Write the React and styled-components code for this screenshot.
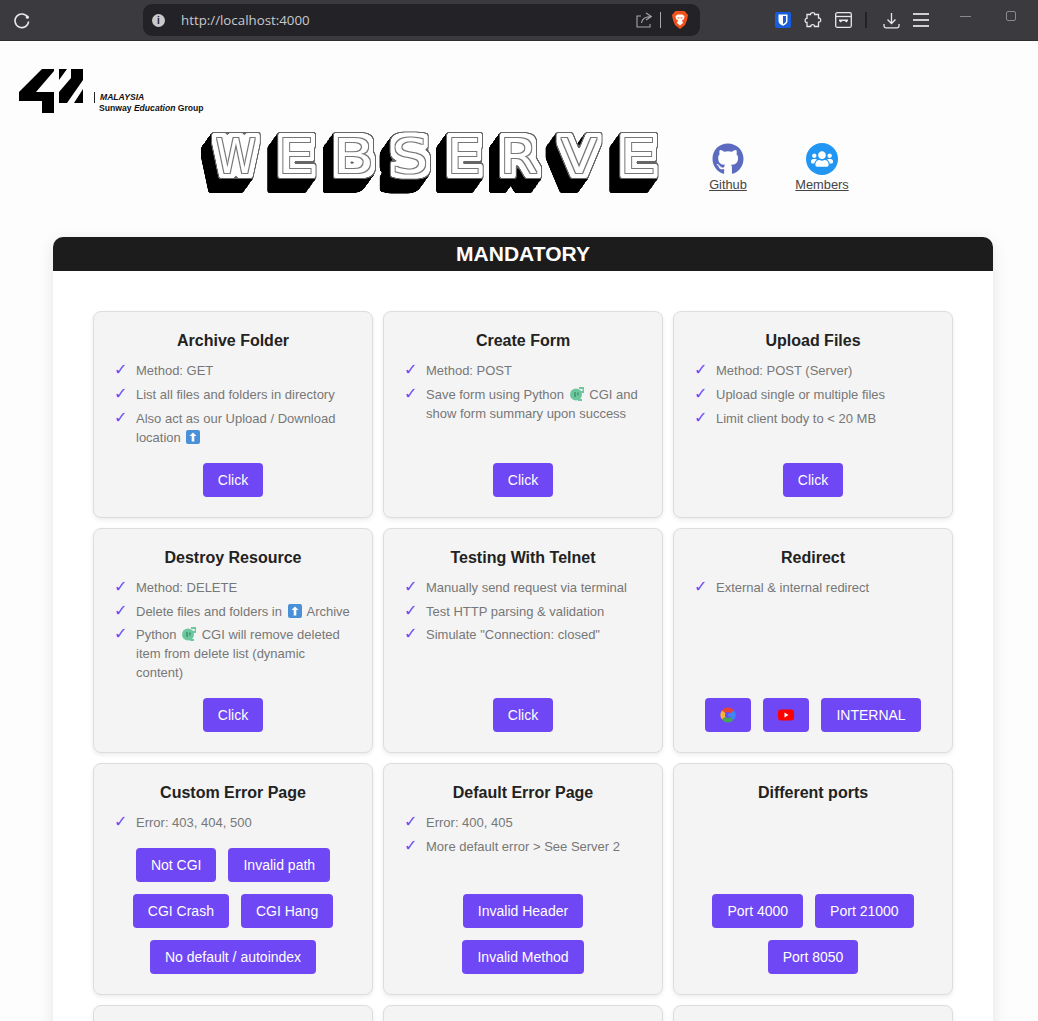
import React from 'react';
import styled, {createGlobalStyle} from 'styled-components';
import {FaGithub, FaUsers} from 'react-icons/fa';

const Global = createGlobalStyle`
html, body {
  margin: 0;
  height: 1021px;
  overflow: hidden;
  background: #fdfdfd;
  font-family: "Liberation Sans", Arial, sans-serif;
}
* { box-sizing: border-box; }
`

const ArrowEmoji = () => (
  <EmojiSvg viewBox="0 0 14 14">
    <rect width="14" height="14" rx="2" fill="#4a90d9" />
    <path d="M7 2.5 10.500 6H8.300v5.500H5.700V6H3.500z" fill="#fff" />
  </EmojiSvg>
)

const SnakeEmoji = () => (
  <EmojiSvg viewBox="0 0 14 14">
    <circle cx="6" cy="7.500" r="6" fill="#6cc79e" />
    <path d="M5 5v5M8 5.500v3" stroke="#3d8f6c" strokeWidth="1.400" />
    <path d="M9 1h4.500v4H10l-1 8h3" fill="none" stroke="#6cc79e" strokeWidth="1.800" />
  </EmojiSvg>
)

const sections = [
  {
    title: 'Archive Folder',
    items: ['Method: GET', 'List all files and folders in directory', <>Also act as our Upload / Download location <ArrowEmoji /></>],
    buttons: ['Click'],
  },
  {
    title: 'Create Form',
    items: ['Method: POST', <>Save form using Python <SnakeEmoji /> CGI and show form summary upon success</>],
    buttons: ['Click'],
  },
  {
    title: 'Upload Files',
    items: ['Method: POST (Server)', 'Upload single or multiple files', 'Limit client body to < 20 MB'],
    buttons: ['Click'],
  },
  {
    title: 'Destroy Resource',
    items: ['Method: DELETE', <>Delete files and folders in <ArrowEmoji /> Archive</>, <>Python <SnakeEmoji /> CGI will remove deleted item from delete list (dynamic content)</>],
    buttons: ['Click'],
  },
  {
    title: 'Testing With Telnet',
    items: ['Manually send request via terminal', 'Test HTTP parsing & validation', 'Simulate "Connection: closed"'],
    buttons: ['Click'],
  },
  {
    title: 'Redirect',
    items: ['External & internal redirect'],
    buttons: [
      <svg key="g" width="16" height="16" viewBox="0 0 16 16">
        <path d="M2 3.500A7.500 7.500 0 0 1 14 3.500L8 8z" fill="#ea4335" />
        <path d="M2 3.500A7.500 7.500 0 0 0 2 12.500L8 8z" fill="#f2b632" />
        <path d="M2 12.500A7.500 7.500 0 0 0 13.500 13L8 8z" fill="#45a755" />
        <path d="M14 3.500A7.500 7.500 0 0 1 13.500 13L8 8z" fill="#4285f4" />
        <circle cx="8" cy="8" r="3" fill="#6f47f5" />
        <rect x="8" y="6.500" width="7.500" height="3" fill="#4285f4" />
      </svg>,
      <svg key="y" width="16" height="12" viewBox="0 0 16 12">
        <rect width="16" height="11" y=".5" rx="3" fill="#f00" />
        <path d="M6.500 3.500v5l4-2.500z" fill="#fff" />
      </svg>,
      'INTERNAL',
    ],
  },
  {
    title: 'Custom Error Page',
    items: ['Error: 403, 404, 500'],
    buttons: ['Not CGI', 'Invalid path', 'CGI Crash', 'CGI Hang', 'No default / autoindex'],
  },
  {
    title: 'Default Error Page',
    items: ['Error: 400, 405', 'More default error > See Server 2'],
    buttons: ['Invalid Header', 'Invalid Method'],
  },
  {
    title: 'Different ports',
    items: [],
    buttons: ['Port 4000', 'Port 21000', 'Port 8050'],
  },
  {title: '', items: [], buttons: []},
  {title: '', items: [], buttons: []},
  {title: '', items: [], buttons: []},
]

// width of each letter's slot and how much it is stretched
const letters = [
  ['W', 52, 0.85], ['E', 40, 1.2], ['B', 45, 1.25], ['S', 40, 1.2],
  ['E', 38, 1.12], ['R', 44, 1.15], ['V', 48, 1.1], ['E', 40, 1.2],
]

const extrude = Array.from({length: 14}, (_, i) => i + 1)

function App() {
  return (
    <>
      <Global />
      <FilterDefs width="0" height="0">
        <filter id="blockType" x="-5%" y="-30%" width="110%" height="170%" colorInterpolationFilters="sRGB">
          <feMorphology in="SourceAlpha" operator="dilate" radius="6" result="fat" />
          <feGaussianBlur in="fat" stdDeviation="1" />
          <feComponentTransfer result="outer">
            <feFuncA type="linear" slope="6" intercept="-2.5" />
          </feComponentTransfer>
          <feMorphology in="SourceAlpha" operator="dilate" radius="5" />
          <feGaussianBlur stdDeviation="0.8" />
          <feComponentTransfer result="bandAlpha">
            <feFuncA type="linear" slope="6" intercept="-2.5" />
          </feComponentTransfer>
          <feFlood floodColor="#fff" />
          <feComposite in2="bandAlpha" operator="in" result="band" />
          <feFlood floodColor="#666" />
          <feComposite in2="outer" operator="in" result="rim" />
          <feMorphology in="SourceAlpha" operator="dilate" radius="1" />
          <feComposite in2="SourceAlpha" operator="out" result="lineAlpha" />
          <feFlood floodColor="#777" />
          <feComposite in2="lineAlpha" operator="in" result="line" />
          {extrude.map(i => (
            <feOffset key={i} in="outer" dx={-i * 10 / 14} dy={i} result={`step${i}`} />
          ))}
          <feMerge>
            {extrude.map(i => <feMergeNode key={i} in={`step${i}`} />)}
            <feMergeNode in="rim" />
            <feMergeNode in="band" />
            <feMergeNode in="line" />
          </feMerge>
        </filter>
      </FilterDefs>

      <BrowserBar>
        <svg width="18" height="18" viewBox="0 0 18 18" fill="none" stroke="#e8e8e8" strokeWidth="1.600">
          <path d="M14.800 6.500A6.800 6.800 0 1 0 15.600 10.500" />
          <circle cx="14.400" cy="6.200" r="1.600" fill="#e8e8e8" stroke="none" />
        </svg>
        <AddressBar>
          <InfoDot>i</InfoDot>
          <Url>http://localhost:4000</Url>
          <svg width="16" height="16" viewBox="0 0 16 16" fill="none" stroke="#a8a8a8" strokeWidth="1.100">
            <path d="M10 1 15.500 4.500 10 8M15.500 4.500C10 4.500 6 6.500 5.500 11" />
            <path d="M5 4H1v11h13v-3" />
          </svg>
          <AddressDivider />
          <svg width="16" height="18" viewBox="0 0 16 18">
            <path d="M3.500 0h9L16 4l-1 5-2 5-5 4-5-4-2-5-1-5z" fill="#f1511b" />
            <path d="M3.500 5 6 3.500h4L12.500 5 12 8l-2 1.500L11 12l-3 2.500L5 12l1-2.500L4 8z" fill="#fff" />
            <path d="M5.500 6.500h2v1h-2zM8.500 6.500h2v1h-2z" fill="#f1511b" />
          </svg>
        </AddressBar>
        <ToolIcons>
          <svg width="16" height="16" viewBox="0 0 16 16">
            <rect width="16" height="16" rx="2" fill="#175ddc" />
            <path d="M3.500 2.500h9v6.500c0 2.500-2.500 3.800-4.500 4.700-2-.9-4.500-2.200-4.500-4.700z" fill="#fff" />
            <path d="M8 4h3v5c0 1.500-1.500 2.400-3 3.100z" fill="#175ddc" />
          </svg>
          <svg width="18" height="18" viewBox="0 0 18 18" fill="none" stroke="#e8e8e8" strokeWidth="1.300">
            <path d="M6.500 3.500C6.500 1 11 1 10.700 3.500H14.500V7C17.500 6.800 17.500 11.500 14.500 11.200V15.500H10.500C10.700 13 6.500 13 6.800 15.500H3V11.500C.5 12 .5 7 3 7.300V3.500z" />
          </svg>
          <svg width="17" height="16" viewBox="0 0 17 16" fill="none" stroke="#e8e8e8" strokeWidth="1.300">
            <rect x=".7" y=".7" width="15.600" height="14.600" rx="1.500" />
            <path d="M1 4.500h15" />
            <path d="M4 7.500h9v1.200L11.500 10.500 9.500 9h-2L5.500 10.500 4 8.700z" fill="#e8e8e8" stroke="none" />
          </svg>
          <ToolDivider />
          <svg width="17" height="17" viewBox="0 0 17 17" fill="none" stroke="#e8e8e8" strokeWidth="1.300">
            <path d="M8.500 1v10M4.500 7.500l4 4 4-4M1 12v2c0 1 .7 1.800 1.800 1.800h11.400c1.100 0 1.800-.8 1.800-1.800v-2" />
          </svg>
          <MenuIcon><span /><span /><span /></MenuIcon>
        </ToolIcons>
        <WindowButtons>
          <Minimise />
          <Maximise />
        </WindowButtons>
      </BrowserBar>

      <Page>
        <LogoRow>
          <svg width="66" height="45" viewBox="0 0 66 45" fill="#000">
            <path d="M23 1h12v2L17 24H35V45H23V33H0V24z" />
            <path d="M40 1h8l-8 11zM52 1h12v11L48 35H40V24L52 10zM64 21v14h-9z" />
          </svg>
          <LogoText>
            <LogoCountry>MALAYSIA</LogoCountry>
            <LogoGroup>Sunway <em>Education</em> Group</LogoGroup>
          </LogoText>
        </LogoRow>
        <HeaderRow>
          <Title>
            {letters.map(([ch, w, sx], i) => (
              <Letter key={i} $width={w} $stretch={sx}>{ch}</Letter>
            ))}
          </Title>
          <TopLink>
            <FaGithub size={32} color="#5c6bc0" />
            <span>Github</span>
          </TopLink>
          <TopLink>
            <MembersCircle><FaUsers size={22} color="#fff" /></MembersCircle>
            <span>Members</span>
          </TopLink>
        </HeaderRow>

        <Panel>
          <PanelHead>MANDATORY</PanelHead>
          <Grid>
            {sections.map((s, i) => (
              <Card key={i}>
                <CardTitle>{s.title}</CardTitle>
                <List>
                  {s.items.map((item, j) => <Item key={j}>{item}</Item>)}
                </List>
                <Buttons>
                  {s.buttons.map((b, j) => <Btn key={j}>{b}</Btn>)}
                </Buttons>
              </Card>
            ))}
          </Grid>
        </Panel>
      </Page>
    </>
  )
}

export default App

const FilterDefs = styled.svg`
position: absolute;
`

const BrowserBar = styled.div`
height: 41px;
background: #3b3b3f;
border-bottom: 1px solid #2e2e31;
display: flex;
align-items: center;
padding-left: 13px;
`

const AddressBar = styled.div`
width: 557px;
height: 32px;
margin-left: 112px;
background: #232327;
border-radius: 9px;
display: flex;
align-items: center;
padding: 0 12px 0 9px;
`

const InfoDot = styled.span`
width: 13px;
height: 13px;
border-radius: 50%;
background: #c9c9c9;
color: #232327;
font-size: 10px;
font-weight: bold;
line-height: 13px;
text-align: center;
`

const Url = styled.span`
margin-left: 16px;
flex: 1;
color: #c8c8cc;
font-size: 13.3px;
font-family: "Open Sans", sans-serif;
`

const AddressDivider = styled.span`
width: 1px;
height: 16px;
background: #a8a8a8;
margin: 0 11px 0 8px;
`

const ToolIcons = styled.div`
display: flex;
align-items: center;
gap: 13px;
margin-left: 75px;
`

const ToolDivider = styled.span`
width: 2px;
height: 16px;
background: #222226;
margin: 0 3px 0 0;
`

const MenuIcon = styled.div`
display: flex;
flex-direction: column;
gap: 4px;
width: 16px;
span {
  height: 2px;
  background: #d0d0d0;
}
`

const WindowButtons = styled.div`
display: flex;
align-items: flex-start;
gap: 35px;
margin-left: 31px;
align-self: flex-start;
`

const Minimise = styled.span`
width: 11px;
height: 1px;
margin-top: 16px;
background: #8a8a8a;
`

const Maximise = styled.span`
width: 10px;
height: 10px;
margin-top: 11px;
border: 1px solid #8a8a8a;
border-radius: 2px;
`

const Page = styled.div`
padding-top: 27px;
`

const LogoRow = styled.div`
display: flex;
align-items: flex-end;
gap: 14px;
padding-left: 19px;
height: 45px;
`

const LogoText = styled.div`
display: flex;
flex-direction: column;
margin-bottom: -1px;
color: #111;
font-size: 8.6px;
font-weight: bold;
line-height: 11px;
`

const LogoCountry = styled.span`
border-left: 1px solid #222;
margin-left: -5px;
padding-left: 5px;
font-style: italic;
`

const LogoGroup = styled.span`
`

const HeaderRow = styled.div`
display: flex;
align-items: flex-start;
height: 124px;
padding-left: 210px;
`

const Title = styled.h1`
display: flex;
gap: 14.4px;
margin: 20px 0 0;
height: 47px;
width: 448px;
color: #fff;
font-family: "DejaVu Sans", sans-serif;
font-weight: normal;
font-size: 48px;
line-height: 47px;
filter: url(#blockType);
`

const Letter = styled.span`
display: block;
flex: none;
width: ${p => p.$width}px;
text-align: center;
transform: scaleX(${p => p.$stretch});
`

const TopLink = styled.a`
display: flex;
flex-direction: column;
align-items: center;
gap: 2px;
width: 94px;
margin-top: 30px;
color: #444;
font-size: 12.8px;
text-decoration: underline;
line-height: 15px;
&:first-of-type { margin-left: 23px; }
`

const MembersCircle = styled.span`
width: 32px;
height: 32px;
border-radius: 50%;
background: #2196f3;
display: flex;
align-items: center;
justify-content: center;
`

const Panel = styled.section`
width: 940px;
margin-left: 53px;
background: #fff;
border-radius: 10px;
box-shadow: 0 4px 16px rgba(0,0,0,0.1);
`

const PanelHead = styled.div`
height: 34px;
background: #1c1c1c;
color: #fff;
border-radius: 10px 10px 0 0;
font-size: 21px;
font-weight: bold;
line-height: 34px;
text-align: center;
`

const Grid = styled.div`
display: grid;
grid-template-columns: repeat(3, 280px);
gap: 10px;
padding: 40px;
`

const Card = styled.div`
display: flex;
flex-direction: column;
min-height: 180px;
padding: 20px;
background: #f4f4f4;
border: 1px solid #ddd;
border-radius: 8px;
box-shadow: 0 2px 4px rgba(0,0,0,0.08);
`

const CardTitle = styled.h3`
margin: 0 0 12px;
min-height: 18px;
color: #222;
font-size: 16px;
line-height: 18px;
font-weight: bold;
text-align: center;
`

const List = styled.ul`
list-style: none;
margin: 0;
padding: 0;
`

const Item = styled.li`
position: relative;
padding-left: 22px;
margin-bottom: 5px;
color: #777;
font-size: 13px;
line-height: 18.9px;
&:last-child { margin-bottom: 0; }
&::before {
  content: "✓";
  position: absolute;
  left: 0;
  top: -1px;
  color: #6f47f5;
  font-family: "DejaVu Sans", sans-serif;
  font-size: 16px;
}
`

const EmojiSvg = styled.svg`
width: 14px;
height: 14px;
vertical-align: -2px;
margin: 0 2px;
`

const Buttons = styled.div`
display: flex;
flex-wrap: wrap;
justify-content: center;
gap: 12px;
margin-top: auto;
padding-top: 15px;
`

const Btn = styled.button`
display: flex;
align-items: center;
justify-content: center;
height: 34px;
padding: 0 15px;
background: #6f47f5;
color: #fff;
border: none;
border-radius: 4px;
font-family: inherit;
font-size: 14px;
`
